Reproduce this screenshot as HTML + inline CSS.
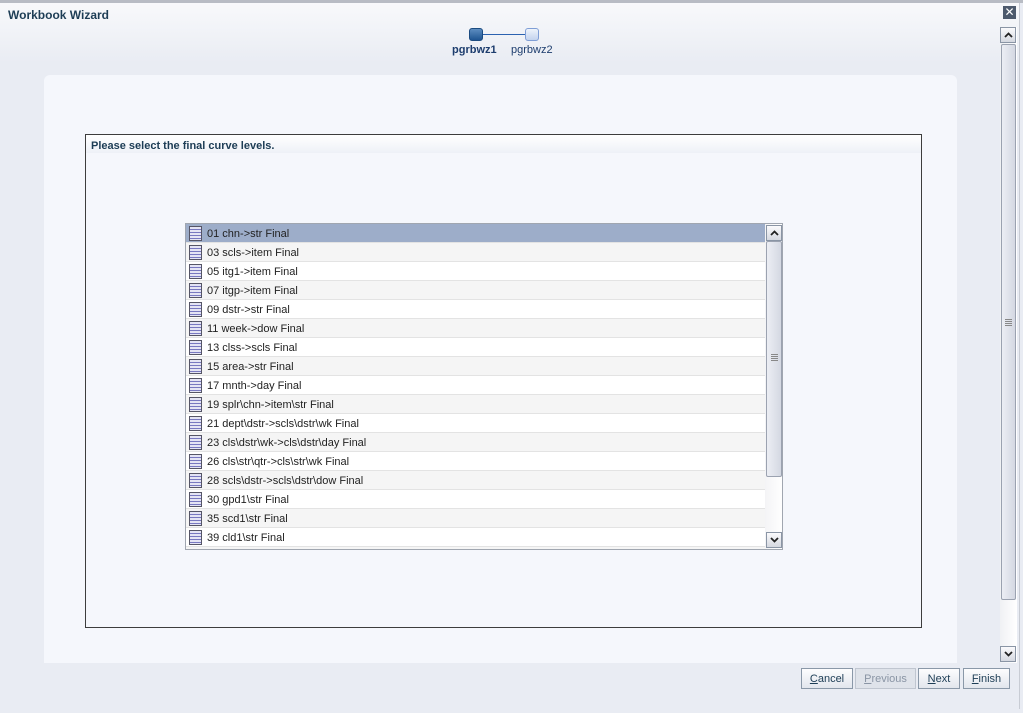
<!DOCTYPE html>
<html><head><style>
*{margin:0;padding:0;box-sizing:border-box}
body{width:1023px;height:713px;overflow:hidden;background:#e9ecf3;font-family:"Liberation Sans",Tahoma,sans-serif;position:relative}
.abs{position:absolute}
.title{left:8px;top:8px;font-size:12px;font-weight:bold;color:#1d3d55}
.row{position:absolute;left:0;width:579px;height:19px;border-bottom:1px solid #e3e3e3;font-size:11px;color:#222;line-height:20px;padding-left:21px}
.row i{position:absolute;left:3px;top:2px;width:13px;height:15px;border:1px solid #556;background:repeating-linear-gradient(#e4e4f4 0 2px,#7878c0 2px 3px);}
.btn{position:absolute;top:668px;height:21px;border:1px solid #8a98a8;background:linear-gradient(#fdfdfe,#e2e6ed);font-size:11px;color:#1d3d55;text-align:center;line-height:20px}
.sbtn{position:absolute;width:16px;height:16px;border:1px solid #8a95a5;background:linear-gradient(#fafafc,#d5d8e0)}
.sbtn svg{position:absolute;left:3px;top:4px}
</style></head><body>
<div class="abs" style="left:0;top:0;width:1023px;height:3px;background:#b8bcc4"></div>
<div class="abs" style="left:0;top:3px;width:1020px;height:706px;background:linear-gradient(#f8f9fb,#e9ecf3 60px);border-right:1px solid #c8ccd4"></div>
<div class="abs title">Workbook Wizard</div>
<div class="abs" style="left:1003px;top:6px;width:13px;height:13px;background:#4d5a6d;color:#fff;font-size:12px;line-height:12px;text-align:center">✕</div>
<div class="abs" style="left:469px;top:28px;width:14px;height:13px;border-radius:3px;background:linear-gradient(#5d8dc0,#1f5592);border:1px solid #1b4b80"></div>
<div class="abs" style="left:483px;top:34px;width:42px;height:1px;background:#2b62b0"></div>
<div class="abs" style="left:525px;top:28px;width:14px;height:13px;border-radius:3px;background:linear-gradient(#eef3fb,#c3d3ee);border:1px solid #7f9ed6"></div>
<div class="abs" style="left:452px;top:44px;font-size:11px;font-weight:bold;color:#1d3d6e">pgrbwz1</div>
<div class="abs" style="left:511px;top:44px;font-size:11px;color:#1d3d6e">pgrbwz2</div>
<div class="abs" style="left:44px;top:75px;width:913px;height:588px;background:#f5f7fc;border-radius:6px 6px 0 0"></div>
<div class="abs" style="left:85px;top:134px;width:837px;height:494px;border:1px solid #3d3d3d;background:#f5f7fc">
<div style="height:18px;background:linear-gradient(#fff,#eef1f7);font-size:11px;font-weight:bold;color:#1d3d55;padding:5px 0 0 5px">Please select the final curve levels.</div>
</div>
<div class="abs" style="left:185px;top:223px;width:598px;height:327px;border:1px solid #a0a6b0;background:#fff;overflow:hidden">
<div class="row" style="top:0;background:#9dadc9">01 chn-&gt;str Final<i></i></div>
<div class="row" style="top:19px;background:#f5f5f5">03 scls-&gt;item Final<i></i></div>
<div class="row" style="top:38px">05 itg1-&gt;item Final<i></i></div>
<div class="row" style="top:57px;background:#f5f5f5">07 itgp-&gt;item Final<i></i></div>
<div class="row" style="top:76px">09 dstr-&gt;str Final<i></i></div>
<div class="row" style="top:95px;background:#f5f5f5">11 week-&gt;dow Final<i></i></div>
<div class="row" style="top:114px">13 clss-&gt;scls Final<i></i></div>
<div class="row" style="top:133px;background:#f5f5f5">15 area-&gt;str Final<i></i></div>
<div class="row" style="top:152px">17 mnth-&gt;day Final<i></i></div>
<div class="row" style="top:171px;background:#f5f5f5">19 splr\chn-&gt;item\str Final<i></i></div>
<div class="row" style="top:190px">21 dept\dstr-&gt;scls\dstr\wk Final<i></i></div>
<div class="row" style="top:209px;background:#f5f5f5">23 cls\dstr\wk-&gt;cls\dstr\day Final<i></i></div>
<div class="row" style="top:228px">26 cls\str\qtr-&gt;cls\str\wk Final<i></i></div>
<div class="row" style="top:247px;background:#f5f5f5">28 scls\dstr-&gt;scls\dstr\dow Final<i></i></div>
<div class="row" style="top:266px">30 gpd1\str Final<i></i></div>
<div class="row" style="top:285px;background:#f5f5f5">35 scd1\str Final<i></i></div>
<div class="row" style="top:304px">39 cld1\str Final<i></i></div>
<div class="row" style="top:323px;background:#f5f5f5"><i></i></div>
<div class="abs" style="left:579px;top:0;width:18px;height:325px;background:linear-gradient(90deg,#f4f4f6,#fff)"></div>
<div class="abs" style="left:580px;top:17px;width:16px;height:236px;border:1px solid #9ba2b0;background:linear-gradient(90deg,#eceef4,#d4d8e2);border-radius:2px"></div>
<div class="abs" style="left:585px;top:130px;width:7px;height:7px;background:repeating-linear-gradient(#888 0 1px,transparent 1px 2px)"></div>
<div class="sbtn" style="left:580px;top:1px"><svg width="9" height="6"><path d="M1 5L4.5 1.5L8 5" stroke="#222" stroke-width="1.8" fill="none"/></svg></div>
<div class="sbtn" style="left:580px;top:308px"><svg width="9" height="6"><path d="M1 1L4.5 4.5L8 1" stroke="#222" stroke-width="1.8" fill="none"/></svg></div>
</div>
<div class="abs" style="left:1000px;top:27px;width:17px;height:636px;background:linear-gradient(90deg,#f0f1f4,#fff)"></div>
<div class="abs" style="left:1001px;top:44px;width:15px;height:556px;border:1px solid #9ba2b0;background:linear-gradient(90deg,#eceef4,#d4d8e2);border-radius:2px"></div>
<div class="abs" style="left:1005px;top:319px;width:7px;height:7px;background:repeating-linear-gradient(#888 0 1px,transparent 1px 2px)"></div>
<div class="sbtn" style="left:1000px;top:27px"><svg width="9" height="6"><path d="M1 5L4.5 1.5L8 5" stroke="#222" stroke-width="1.8" fill="none"/></svg></div>
<div class="sbtn" style="left:1000px;top:646px"><svg width="9" height="6"><path d="M1 1L4.5 4.5L8 1" stroke="#222" stroke-width="1.8" fill="none"/></svg></div>
<div class="btn" style="left:801px;width:52px"><u>C</u>ancel</div>
<div class="btn" style="left:855px;width:61px;color:#8a95a5;background:#dfe3ea;border-color:#c0c6d0"><u>P</u>revious</div>
<div class="btn" style="left:918px;width:42px"><u>N</u>ext</div>
<div class="btn" style="left:963px;width:47px"><u>F</u>inish</div>
</body></html>
